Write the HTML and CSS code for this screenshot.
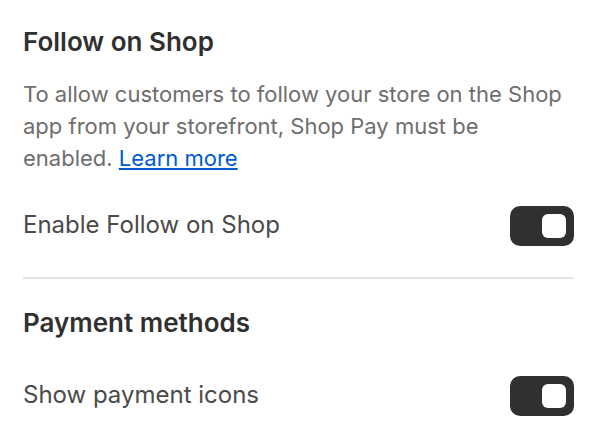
FILE: index.html
```html
<!DOCTYPE html>
<html>
	<head>
		<title>Settings</title>
		<link rel="stylesheet" href="styles.css">
	</head>
	<body>
		<div class="panel">
			<div class="section">
				<h2 class="title">Follow on Shop</h2>
				<p class="desc">To allow customers to follow your store on the Shop app from your storefront, Shop Pay must be enabled. <a href="#" class="link">Learn more</a></p>
				<div class="row">
					<span class="label">Enable Follow on Shop</span>
					<span class="toggle on"><span class="knob"></span></span>
				</div>
			</div>
			<div class="section">
				<h2 class="title">Payment methods</h2>
				<div class="row">
					<span class="label">Show payment icons</span>
					<span class="toggle on"><span class="knob"></span></span>
				</div>
			</div>
		</div>
	</body>
</html>
```
FILE: styles.css
```css
body{
	margin: 0;
	background: #ffffff;
	font-family: Inter, "Noto Sans", sans-serif;
}
.panel{
	padding: 0 22px 0 23px;
}
.section{
	padding: 26px 0 31px;
}
.section + .section{
	border-top: 2px solid #e3e3e3;
	padding-top: 28px;
}
.title{
	margin: 0;
	font-size: 26px;
	line-height: 32px;
	font-weight: 600;
	color: #303030;
}
.desc{
	margin: 20px 0 0;
	font-size: 22px;
	line-height: 32px;
	color: #6e6e6e;
}
.link{
	color: #005bd3;
}
.row{
	display: flex;
	align-items: center;
	justify-content: space-between;
	margin-top: 32px;
}
.title + .row{
	margin-top: 37px;
}
.label{
	font-size: 24px;
	line-height: 34px;
	margin-bottom: 3px;
	color: #4a4a4a;
}
.toggle{
	width: 64px;
	height: 40px;
	border-radius: 10px;
	background: #303030;
	display: flex;
	align-items: center;
	justify-content: flex-end;
	padding: 0 8px;
	box-sizing: border-box;
}
.knob{
	width: 24px;
	height: 24px;
	border-radius: 6px;
	background: #ffffff;
}
```
